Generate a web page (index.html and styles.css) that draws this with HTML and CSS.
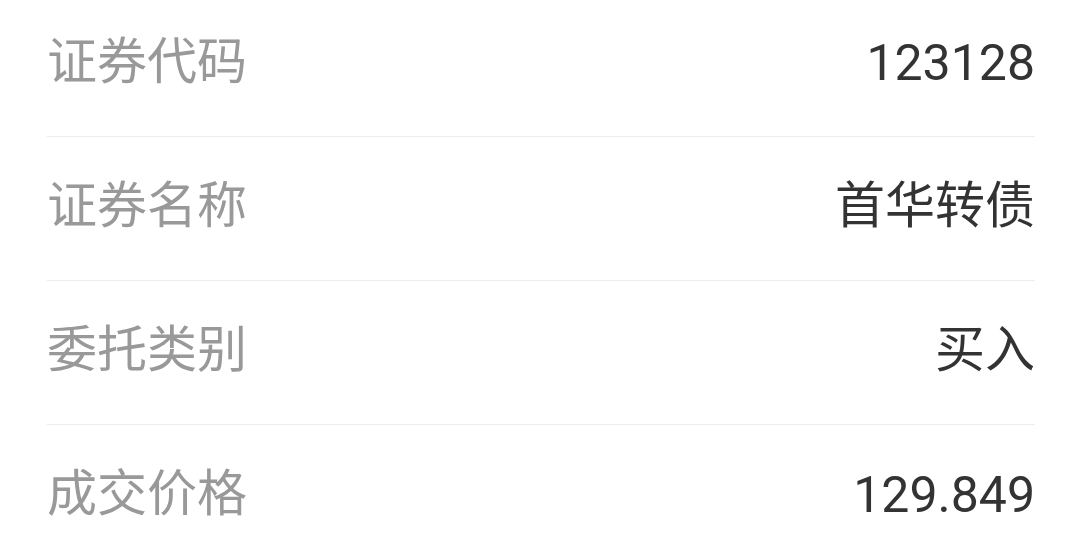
FILE: index.html
```html
<!DOCTYPE html>
<html lang="zh-CN">
<head>
    <meta charset="UTF-8">
    <meta name="viewport" content="width=device-width, initial-scale=1.0">
    <title>委托详情</title>
    <link rel="stylesheet" href="styles.css">
</head>
<body>
    <div class="detail-list">
        <div class="detail-row">
            <span class="label">证券代码</span>
            <span class="value">123128</span>
        </div>
        <div class="detail-row">
            <span class="label">证券名称</span>
            <span class="value cjk">首华转债</span>
        </div>
        <div class="detail-row">
            <span class="label">委托类别</span>
            <span class="value cjk">买入</span>
        </div>
        <div class="detail-row">
            <span class="label">成交价格</span>
            <span class="value">129.849</span>
        </div>
    </div>
</body>
</html>
```

FILE: styles.css
```css
* {
    box-sizing: border-box;
    margin: 0;
    padding: 0;
}

body {
    background: #fff;
    font-family: Roboto, "Noto Sans CJK SC", sans-serif;
    overflow: hidden;
}

.detail-list {
    margin-top: -7px;
    padding: 0 45px 0 47px;
}

.detail-row {
    display: flex;
    align-items: center;
    justify-content: space-between;
    height: 144px;
    border-bottom: 1px solid #ededed;
    font-size: 50px;
}

.label {
    color: #999;
    font-family: "Noto Sans CJK SC", sans-serif;
    line-height: 1;
    padding-bottom: 16px;
}

.value {
    color: #333;
    line-height: 1;
    padding-bottom: 4px;
}

.value.cjk {
    font-family: "Noto Sans CJK SC", sans-serif;
    padding-bottom: 16px;
}
```
